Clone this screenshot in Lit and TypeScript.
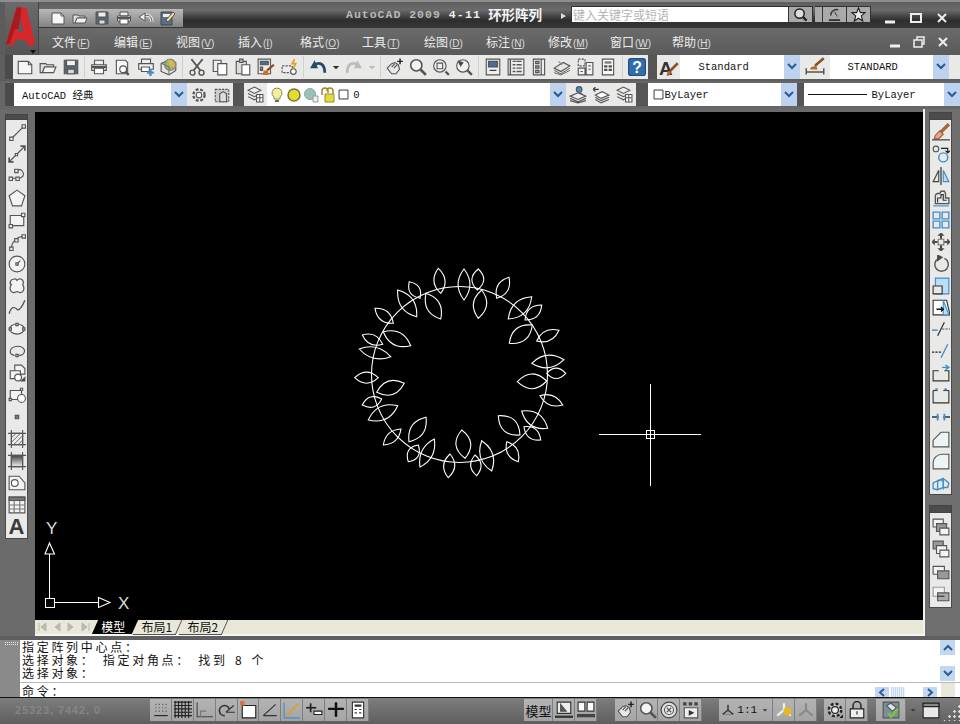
import { LitElement, html, css, svg } from "lit";
import { customElement } from "lit/decorators.js";

const BLUE = "#3f8fcf";

// every icon is drawn on a 16x16 box
const icons: Record<string, any> = {
  new: svg`<path d="M2 3h9l3 3v8H2z" fill="#f7f7f7"/><path d="M11 3v3h3"/>`,
  open: svg`<path d="M1 5h5l1 1h6v2H5l-2 5H1z" fill="#ddd"/><path d="M3 13l2-5h10l-2 5z" fill="#f2f2f2"/>`,
  save: svg`<path d="M2 2h12v12H2z" fill="#5a6472"/><path d="M4 2h8v5H4z" fill="#eee"/><path d="M5 10h6v4H5z" fill="#ddd"/>`,
  plot: svg`<path d="M4 2h8v4H4zM1.500 6h13v5h-13z" fill="#eee"/><path d="M4 9h8v5H4z" fill="#fff"/><path d="M1.500 8h13" stroke-width="2"/>`,
  preview: svg`<path d="M3 2h8l2 2v10H3z" fill="#f6f6f6"/><circle cx="9" cy="10" r="3" fill="#fff"/><path d="M11 12l3 3" stroke-width="2"/>`,
  publish: svg`<path d="M4 1h8v4H4zM1.500 5h13v5h-13z" fill="#eee"/><path d="M4 8h7v4H4z" fill="#fff"/><path d="M9 13h6M12 10v6" stroke="${BLUE}" stroke-width="2"/>`,
  globe: svg`<path d="M1 5l6-3 7 2v7l-6 4-7-3z" fill="#e6e6e6"/><circle cx="9" cy="6" r="5" fill="#8fb86a" stroke="#888"/><path d="M7 2a5 5 0 0 1 6 6l-4 0z" fill="#e6b04a" stroke="none"/><path d="M2 5l6 3v7" stroke="#777"/>`,
  cut: svg`<path d="M3 1l8 10M13 1L5 11" stroke-width="1.500"/><circle cx="4" cy="13" r="2.200" stroke-width="1.200"/><circle cx="12" cy="13" r="2.200" stroke-width="1.200"/>`,
  copy: svg`<path d="M2 2h7v10H2z" fill="#eee"/><path d="M6 5h8v10H6z" fill="#fff"/>`,
  paste: svg`<path d="M2 3h9v11H2z" fill="#ddd"/><path d="M5 1h3v3H5z" fill="#bbb"/><path d="M7 6h7v9H7z" fill="#fff"/>`,
  match: svg`<path d="M1 1h11v13H1z" fill="#eee"/><path d="M3 3h7v3H3z" fill="#4a6a9a"/><path d="M3 8h2v3H3z" fill="#888"/><path d="M15 6L9 11" stroke="#8a4a20" stroke-width="2"/><path d="M6 11l4 0 0 4-5 0z" fill="#c8702c" stroke="none"/>`,
  blockfx: svg`<path d="M1 7h9v6H1z" fill="#eee" stroke-dasharray="2 1"/><circle cx="11" cy="12" r="2.500" fill="#fff"/><path d="M12 1l-2 4h3l-2 4" stroke="#e0a020" stroke-width="1.500"/>`,
  undo: svg`<path d="M14 13C14 6 10 3 5 6" stroke="#27496e" stroke-width="2.500"/><path d="M1 9l7 0-3-7z" fill="#27496e" stroke="none"/>`,
  redo: svg`<path d="M2 13C2 6 6 3 11 6" stroke="#bbb" stroke-width="2.500"/><path d="M15 9l-7 0 3-7z" fill="#bbb" stroke="none"/>`,
  qundo: svg`<path d="M14 12C14 6 10 4 5 6" stroke="#eee" stroke-width="3"/><path d="M14 12C14 6 10 4 5 6" stroke="#555" stroke-width="1"/><path d="M1 7l6-4v8z" fill="#eee" stroke="#555"/>`,
  qprops: svg`<path d="M1 2h11v13H1z" fill="#5a7088" stroke="#444"/><path d="M3 4h7v3H3z" fill="#eee" stroke="none"/><path d="M6 10l2 2 7-8-2-2z" fill="#f0dc90" stroke="#555"/>`,
  drop: svg`<path d="M5 7h6l-3 3z" fill="#333" stroke="none"/>`,
  dropg: svg`<path d="M5 7h6l-3 3z" fill="#bbb" stroke="none"/>`,
  pan: svg`<path d="M1 9l4-4 3-1 3 2 1 4-3 4H5z" fill="#e8e8e8"/><path d="M5 8l3-3M7 9l3-3"/><path d="M10 3h5M12.500 .5v5" stroke="#222" stroke-width="1.300"/>`,
  zoom: svg`<circle cx="6.500" cy="6.500" r="5" fill="#f3f3f3" stroke-width="1.400"/><path d="M10 10l5 5" stroke-width="2.400"/>`,
  zoomwin: svg`<circle cx="7" cy="7" r="5.500" fill="#eee"/><path d="M4.500 4.500h5v5h-5z"/><path d="M12 12l3 3" stroke-width="2"/>`,
  zoomprev: svg`<circle cx="7" cy="7" r="5.500" fill="#f2f2f2"/><path d="M3 3l4 1-2 3z" fill="#333"/><path d="M11 11l4 4" stroke-width="2"/>`,
  props: svg`<path d="M2 1h12v14H2z" fill="#eee"/><path d="M4 3h8v5H4z" fill="#4a6a9a"/><path d="M5 11h6" stroke="#333"/>`,
  dc: svg`<path d="M1 1h14v14H1z" fill="#eee"/><path d="M3 1v14M5 3h8M5 6h8M5 9h8M5 12h8" stroke-width="1.200"/><path d="M8 3v10" stroke="#eee"/>`,
  palette: svg`<path d="M3 1h10v14H3z" fill="#eee"/><path d="M5 3h3v2H5zM5 7h3v2H5zM5 11h3v2H5z" fill="#aaa"/><path d="M10 1v14"/>`,
  sheet: svg`<path d="M1 9l8-5 6 3-8 5z" fill="#e6e6e6"/><path d="M1 11l6 3 8-5M1 13l6 2 8-4" stroke-width=".8"/><path d="M5 3l3 3" stroke="#888"/>`,
  markup: svg`<path d="M2 1h6v6H2z" stroke-dasharray="2 1"/><path d="M9 4h6v11H9zM2 9h6v6H2z" fill="#f2f2f2"/><path d="M11 7h2M11 10h2M4 12h2"/>`,
  calc: svg`<path d="M3 1h10v14H3z" fill="#f6f6f6"/><path d="M5 3h6v2H5z" fill="#777" stroke="none"/><path d="M5 7h2v1H5zM9 7h2v1H9zM5 10h2v1H5zM9 10h2v1H9z" fill="#555"/>`,
  help: svg`<rect x=".5" y=".5" width="15" height="15" rx="2" fill="#2f6eaa" stroke="#1f4f80"/><text x="8" y="13" text-anchor="middle" class="gl">?</text>`,
  textstyle: svg`<text x="0" y="14" class="big">A</text><path d="M15 5l-6 6" stroke="#8a5020" stroke-width="2"/><path d="M7 11l3 1-2 3-2 0z" fill="#b86a28" stroke="none"/>`,
  dimstyle: svg`<path d="M1 9v5M15 9v5M1 12h14" stroke-width="1.200"/><path d="M15 1L8 7" stroke="#8a5020" stroke-width="2"/><path d="M5 8l4-1 1 3H4z" fill="#b86a28" stroke="none"/>`,
  gear: svg`<circle cx="8" cy="8" r="5" fill="#eee" stroke-width="2" stroke-dasharray="2.500 1.500"/><circle cx="8" cy="8" r="2.500" fill="#fff"/>`,
  custom: svg`<path d="M2 3h12v11H2z" fill="#ccc" stroke-dasharray="2 1"/><path d="M6 14V7l3-2 3 2v7z" fill="#ddd"/>`,
  layer: svg`<path d="M1 4l6-3 6 3-6 3z" fill="#eee"/><path d="M1 7l6 3 3-1.500M1 10l6 3 2-1"/><path d="M9 8h6v7H9z" fill="#fff"/><path d="M9 11h6M12 8v7"/>`,
  bulb: svg`<path d="M8 1a5 5 0 0 1 3 9v2H5v-2a5 5 0 0 1 3-9z" fill="#f3ef9a" stroke="#8a8a55"/><path d="M6 14h4" stroke="#666" stroke-width="2"/>`,
  sun: svg`<circle cx="8" cy="8" r="6" fill="#e6dc30" stroke="#6f7a40" stroke-width="1.500"/>`,
  freeze: svg`<circle cx="7" cy="7" r="5.500" fill="#9cc0b8" stroke="#8aa"/><path d="M10 9h5v6h-5z" fill="#eee" stroke="#999"/>`,
  lock: svg`<path d="M2 8V4a3 3 0 0 1 6 0v2" stroke="#9a8a30" stroke-width="1.500"/><path d="M7 4a3 3 0 0 1 6 0v3" stroke="#9a8a30" stroke-width="1.500"/><path d="M5 7h9v8H5z" fill="#e6d840" stroke="#9a8a30"/>`,
  swatch: svg`<path d="M2.500 2.500h11v11h-11z" fill="#fff" stroke="#111"/>`,
  layerprev: svg`<path d="M3 8l5 3 7-3-6-3z" fill="#fff"/><path d="M3 10l5 3 7-3M3 12l5 3 7-3"/><path d="M1 3h5M1 3l2-2M1 3l2 2" stroke="#333"/>`,
  layerman: svg`<circle cx="9" cy="3" r="2.500" fill="${BLUE}"/><path d="M6 8c0-2 6-2 6 0z" fill="${BLUE}"/><path d="M1 9l7-3 7 3-7 3z" fill="#eee"/><path d="M1 11l7 3 7-3M1 13l7 2 7-2"/>`,
  // draw bar
  line: svg`<path d="M3 14L14 3"/><path d="M1.500 12.500h3v3h-3zM12.500 1.500h3v3h-3z" fill="#eee"/>`,
  xline: svg`<path d="M1 15L15 1" stroke-width="1.200"/><path d="M1 11v4h4M11 1h4v4" stroke-width="1.500"/><path d="M6.500 7.500h2v2h-2z" fill="#eee"/>`,
  pline: svg`<path d="M3 10h6C13 10 15 7 13 4 12 2 10 2 8 3"/><path d="M1 9h3v3H1zM7 9h3v3H7zM6 2h3v3H6z" fill="#eee"/>`,
  polygon: svg`<path d="M8 1l7 5-3 9H4L1 6z" fill="#f3f3f3"/>`,
  rect: svg`<path d="M2 4h12v9H2z" fill="#f3f3f3"/><path d="M1 12h3v3H1zM12 2h3v3h-3z" fill="#eee"/>`,
  arc: svg`<path d="M3 14C3 8 8 3 14 3"/><path d="M1.500 12.500h3v3h-3zM12.500 1.500h3v3h-3zM6 5h3v3H6z" fill="#eee"/>`,
  circle: svg`<circle cx="8" cy="8" r="7" fill="#f3f3f3"/><path d="M8 8l3-3"/><path d="M7 7h2v2H7z" fill="#eee"/>`,
  cloud: svg`<path d="M5 2c2-1 3 1 3 1s2-2 4-1 2 4 1 5c1 1 2 4 0 6s-4 0-5 0-3 2-5 0-1-5 0-6C1 6 2 2 5 2z" fill="#f3f3f3" stroke-width="1.100"/>`,
  spline: svg`<path d="M1 14C3 7 6 8 8 10S13 7 15 2" stroke-width="1.200"/>`,
  ellipse: svg`<ellipse cx="8" cy="8" rx="6.500" ry="4.500" fill="#f3f3f3"/><path d="M1 7h2v2H1zM13 7h2v2h-2zM7 3h2v2H7z" fill="#eee"/>`,
  ellarc: svg`<path d="M6 12C0 11 1 5 7 4c6-1 9 3 7 6-1 2-3 2-5 2"/><path d="M7 11h2v2H7z" fill="#eee"/>`,
  insert: svg`<path d="M6 1h6l3 3v5H6z" fill="#f3f3f3"/><path d="M2 6h9v7H2z" fill="#f3f3f3"/><circle cx="9" cy="12" r="3" fill="#fff"/><path d="M12 15l3-3v3z" fill="#111"/>`,
  block: svg`<path d="M2 4h10v8H2z" fill="#f3f3f3"/><circle cx="12" cy="11" r="3.500" fill="#fff"/><path d="M1 11h2v2H1zM11 2h2v2h-2z" fill="#eee"/>`,
  point: svg`<path d="M6.500 6.500h3v3h-3z" fill="#777"/>`,
  hatch: svg`<path d="M3 3h10v10H3z" fill="#eee"/><path d="M0 3h16M0 13h16M3 0v16M13 0v16"/><path d="M3 7l4-4M3 11l8-8M5 13l8-8M9 13l4-4" stroke-width=".8"/>`,
  gradient: svg`<defs><linearGradient id="gr" x2="0" y2="1"><stop stop-color="#444"/><stop offset="1" stop-color="#eee"/></linearGradient></defs><path d="M3 3h10v10H3z" fill="url(#gr)"/><path d="M0 3h16M0 13h16M3 0v16M13 0v16"/>`,
  region: svg`<path d="M1 2h9l5 6v6H1z" fill="#f3f3f3"/><circle cx="6" cy="8" r="3" fill="#fff"/>`,
  table: svg`<path d="M1 1h14v14H1z" fill="#f3f3f3"/><path d="M1 1h14v3H1z" fill="#777"/><path d="M1 8h14M1 11.500h14M5.500 4v11M10.500 4v11" stroke="#777"/>`,
  // modify bar
  erase: svg`<path d="M15 1L7 9" stroke="#a06a3c" stroke-width="3"/><path d="M3 11l4-4 3 3-4 4H2z" fill="#e8a890" stroke="#a05a40"/><path d="M0 15h16" stroke="#333"/>`,
  copyobj: svg`<circle cx="3.500" cy="3.500" r="2.500"/><circle cx="10" cy="11" r="4" stroke="${BLUE}" stroke-width="1.300"/><path d="M8 3h6v4M12 5l2 2 2-2" stroke="#222"/>`,
  mirror: svg`<path d="M8 0v16" stroke="#222"/><path d="M6 3v10H1z" stroke="#444"/><path d="M10 3v10h5z" fill="#bcdcf0" stroke="${BLUE}"/>`,
  offset: svg`<path d="M3 10V6a2 2 0 0 1 2-2h2l1-2h3l1 2v4h3v5H3z" stroke-width="1.200"/><path d="M5 12V8h3V5h2v5h3" stroke="#333"/><path d="M1 15h14" stroke="${BLUE}"/>`,
  array: svg`<path d="M1 1h6v6H1zM9 1h6v6H9zM1 9h6v6H1zM9 9h6v6H9z" stroke="${BLUE}" stroke-width="1.200"/>`,
  move: svg`<path d="M5.500 5.500h5v5h-5z" stroke="#777"/><path d="M8 5V1M8 15v-4M5 8H1M15 8h-4" stroke="#222" stroke-width="1.500"/><path d="M6 2l2-2 2 2zM6 14l2 2 2-2zM2 6L0 8l2 2zM14 6l2 2-2 2z" fill="#222"/>`,
  rotate: svg`<path d="M6 3a6 6 0 1 0 5 0" stroke-width="1.300"/><path d="M5 0l4 2-4 3z" fill="#444"/>`,
  scale: svg`<path d="M3 1h12v14H3z" fill="#bcdcf0" stroke="${BLUE}"/><path d="M1 8h8v7H1z" fill="#e8e8e8" stroke="#333"/>`,
  stretch: svg`<path d="M1 2h7l5 0 3 13H1z" fill="#fff" stroke="#333"/><path d="M10 2l5 13h-5z" fill="#bcdcf0" stroke="${BLUE}"/><path d="M4 10h6M8 8l2 2-2 2" stroke="#111" stroke-width="1.200"/>`,
  trim: svg`<path d="M0 9h5" stroke="${BLUE}" stroke-width="1.300"/><path d="M5 14l6-12" stroke="#222"/><path d="M9 8h7" stroke="#555" stroke-dasharray="2 1"/>`,
  extend: svg`<path d="M0 9h8" stroke="#222" stroke-dasharray="2 1"/><path d="M8 14l6-12" stroke="${BLUE}" stroke-width="1.300"/>`,
  break: svg`<path d="M1 6h14v9H1z" stroke="#333"/><path d="M6 6h5" stroke="#eee" stroke-width="2"/><path d="M9 3h5M12 1l3 2-3 2" stroke="${BLUE}" stroke-width="1.300"/>`,
  breakpt: svg`<path d="M1 4v11h14V4" stroke="#333"/><path d="M1 4h14" stroke="#333"/><path d="M5 4h5" stroke="#eee" stroke-width="2"/><path d="M3 3h2M11 3h2" stroke="${BLUE}" stroke-width="2"/>`,
  join: svg`<path d="M0 8h6M10 8h6" stroke="#333" stroke-width="1.300"/><path d="M5 5v6M11 5v6" stroke="${BLUE}" stroke-width="1.600"/>`,
  chamfer: svg`<path d="M1 15V9l7-7h7v13z" fill="#eef3f6"/>`,
  fillet: svg`<path d="M1 15V10C1 5 5 2 9 2h6v13z" fill="#eef3f6"/>`,
  explode: svg`<path d="M5 6l5-2v8l-5 2zM5 6L1 8v5l4 1" stroke="${BLUE}" stroke-width="1.200"/><path d="M10 4l5 4-1 4-4 0" stroke="${BLUE}" stroke-width="1.200"/><path d="M5 6h5v8" stroke="${BLUE}"/>`,
  order1: svg`<path d="M1 1h9v7H1z" fill="#f3f3f3"/><path d="M4 5h9v7H4z" fill="#999"/><path d="M7 9h8v6H7z" fill="#f3f3f3"/>`,
  order2: svg`<path d="M1 1h9v7H1z" fill="#999"/><path d="M4 5h9v7H4z" fill="#f3f3f3"/><path d="M7 9h8v6H7z" fill="#f3f3f3"/>`,
  order3: svg`<path d="M1 3h10v7H1z" fill="#f3f3f3"/><path d="M5 7h10v7H5z" fill="#999"/>`,
  order4: svg`<path d="M1 2h10v8H1z" fill="#f3f3f3" stroke="#999"/><path d="M5 7h10v7H5z" fill="#aaa"/><path d="M5 10h6" stroke="#333"/>`,
  // status bar
  snap: svg`<path d="M3 3h1M6 3h1M9 3h1M12 3h1M3 6h1M6 6h1M9 6h1M12 6h1M3 9h1M6 9h1M9 9h1M12 9h1" stroke-dasharray="1 2"/><path d="M2 13h12" stroke="#222"/>`,
  grid: svg`<path d="M0 1h16M0 4h16M0 7h16M0 10h16M0 13h16M1 0v15M4 0v15M7 0v15M10 0v15M13 0v15" stroke="#222"/>`,
  ortho: svg`<path d="M1 1v13h14" stroke="#444"/><path d="M4 14V9h5" stroke="#777"/>`,
  polar: svg`<path d="M6 13a4.500 4.500 0 1 1 4-6" stroke="#333" stroke-width="1.400"/><path d="M7 10l7-6M7 10h8" stroke="#333"/>`,
  osnap: svg`<path d="M2 4h12v11H2z" fill="#fff" stroke="#222"/><path d="M0 0h4v4H0z" fill="#d8763a" stroke="none"/>`,
  otrack: svg`<path d="M2 13L13 3M2 13h12" stroke="#333"/>`,
  ducs: svg`<path d="M1 1v14h14" stroke="${BLUE}"/><path d="M3 13L14 2" stroke="#e0a020" stroke-width="2" stroke-dasharray="3 1"/>`,
  dyn: svg`<path d="M1 6h9" stroke="#222" stroke-width="1.500"/><path d="M5 2v8" stroke="#222" stroke-width="1.500"/><path d="M8 9h7v3H8z" fill="#fff" stroke="#222"/>`,
  lw: svg`<path d="M1 7h14M8 1v13" stroke="#111" stroke-width="2.200"/>`,
  qp: svg`<path d="M3 1h10v14H3z" fill="#fff" stroke="#333"/><path d="M5 3h6v2H5zM5 7h2v1H5zM9 7h2v1H9zM5 10h2v1H5zM9 10h2v1H9z" fill="#333" stroke="none"/>`,
  model: svg`<path d="M2 1h12v10H2z" fill="#eee" stroke="#333"/><path d="M5 3v6h5z" fill="#555"/><path d="M0 14h16" stroke="#333" stroke-width="2"/>`,
  layouts: svg`<path d="M1 1h6v8H1zM9 1h6v8H9z" fill="#fff" stroke="#333"/><path d="M0 13h16" stroke="#444" stroke-width="3"/>`,
  wheel: svg`<circle cx="8" cy="8" r="7" fill="#ddd" stroke="#444"/><circle cx="8" cy="8" r="4" fill="#eee" stroke="#555"/><path d="M6 6l4 4M10 6l-4 4" stroke="#555"/>`,
  motion: svg`<path d="M1 1h3v3H1zM6 1h3v3H6zM11 1h3v3h-3z" fill="#444" stroke="none"/><path d="M2 6h12v9H2z" fill="#eee"/><path d="M6 8l5 2.500L6 13z" fill="#333" stroke="none"/>`,
  anno: svg`<path d="M8 8V2M8 8l-6 5M8 8l6 5" stroke="#333" stroke-width="1.600"/><path d="M4 13h8" stroke="#777"/>`,
  annosun: svg`<path d="M8 8V2M8 8l-6 5M8 8l6 5" stroke="#eee" stroke-width="2"/><circle cx="11" cy="9" r="3.500" fill="#e8b820" stroke="none"/>`,
  annooff: svg`<path d="M8 8V2M8 8l-6 5M8 8l6 5" stroke="#8a8a8a" stroke-width="2"/>`,
  gearbig: svg`<circle cx="8" cy="8" r="5.500" fill="#ccc" stroke="#222" stroke-width="2.200" stroke-dasharray="2.500 1.800"/><circle cx="8" cy="8" r="3" fill="#eee" stroke="#222"/><path d="M12 15l3-3v3z" fill="#111" stroke="none"/>`,
  padlock: svg`<path d="M4.500 7V4a3.500 3.500 0 0 1 7 0v3" stroke="#222" stroke-width="1.300"/><path d="M2 7h12v8H2z" fill="#eee" stroke="#222"/><path d="M8 9v3" stroke="#222"/>`,
  clean: svg`<path d="M1 1h14v14H1z" fill="#7b8f96" stroke="#555"/><path d="M4 4l4-2 5 4-4 3z" fill="#dce8ee"/><path d="M6 11l2 3 6-7" stroke="#7fc040" stroke-width="2.200"/>`,
  win: svg`<path d="M1 2h14v13H1z" fill="#e8e8e8" stroke="#222"/><path d="M1 2h14v3H1z" fill="#888" stroke="#222"/>`,
  search: svg`<circle cx="7" cy="7" r="5" fill="#ddd" stroke="#222" stroke-width="1.600"/><path d="M10.500 10.500l4 4" stroke="#222" stroke-width="2.400"/>`,
  sat: svg`<path d="M4 9c0-5 5-7 8-6" stroke="#333" stroke-width="1.500"/><path d="M8 5l3 5" stroke="#333"/><path d="M2 14h12" stroke="#333" stroke-width="2"/>`,
  star: svg`<path d="M8 1l2 5h5l-4 3.500 1.500 5.500L8 12l-4.500 3L5 9.500 1 6h5z" fill="#eee" stroke="#222" stroke-width="1.200"/>`,
};

const icon = (name: string, size = 18) => html`<svg class="ic" width=${size} height=${size} viewBox="0 0 16 16">${icons[name]}</svg>`;

const chevron = html`<svg class="chev" width="10" height="8" viewBox="0 0 10 8"><path d="M1 1l4 4 4-4" /></svg>`;

const MENUS = [["文件", "F"], ["编辑", "E"], ["视图", "V"], ["插入", "I"], ["格式", "O"], ["工具", "T"], ["绘图", "D"], ["标注", "N"], ["修改", "M"], ["窗口", "W"], ["帮助", "H"]];
const STD_GROUPS = [
  ["new", "open", "save"],
  ["plot", "preview", "publish", "globe"],
  ["cut", "copy", "paste", "match", "blockfx"],
  ["undo", "drop", "redo", "dropg"],
  ["pan", "zoom", "zoomwin", "zoomprev"],
  ["props", "dc", "palette", "sheet", "markup", "calc"],
  ["help"],
];
const DRAW = ["line", "xline", "pline", "polygon", "rect", "arc", "circle", "cloud", "spline", "ellipse", "ellarc", "insert", "block", "point", "hatch", "gradient", "region", "table"];
const MODIFY = ["erase", "copyobj", "mirror", "offset", "array", "move", "rotate", "scale", "stretch", "trim", "extend", "break", "breakpt", "join", "chamfer", "fillet", "explode"];
const ORDER = ["order1", "order2", "order3", "order4"];
const STATUS_TOGGLES = ["snap", "grid", "ortho", "polar", "osnap", "otrack", "ducs", "dyn", "lw", "qp"];

// leaves as [tipA x, y, tipB x, y, width], read off a 3x crop with origin (340, 255)
const LEAVES = [
  [295, 40, 302, 115, 30], [372, 42, 372, 135, 32], [415, 42, 412, 105, 32], [507, 67, 470, 130, 30],
  [425, 105, 415, 190, 36], [258, 115, 302, 192, 36], [208, 80, 240, 130, 28], [173, 105, 230, 185, 36],
  [105, 160, 160, 205, 28], [575, 125, 505, 192, 36], [605, 150, 555, 195, 28], [577, 210, 508, 265, 38],
  [657, 226, 590, 258, 28], [130, 230, 212, 272, 36], [67, 240, 128, 268, 26], [58, 282, 152, 305, 30],
  [672, 314, 575, 325, 34], [677, 355, 620, 355, 28], [620, 378, 532, 380, 40], [44, 368, 115, 368, 30],
  [193, 385, 110, 412, 38], [67, 450, 125, 432, 28], [173, 452, 85, 495, 36], [600, 422, 668, 450, 26],
  [545, 468, 623, 520, 36], [552, 515, 602, 555, 28], [475, 482, 540, 540, 40], [500, 560, 535, 620, 28],
  [183, 522, 130, 570, 26], [258, 487, 207, 560, 36], [365, 525, 375, 610, 40], [235, 570, 205, 620, 30],
  [283, 552, 240, 636, 30], [425, 557, 455, 648, 34], [405, 600, 410, 662, 28], [330, 597, 325, 668, 30],
];

function leafPath([ax, ay, bx, by, w]: number[]) {
  const [x1, y1, x2, y2] = [ax / 3 + 340, ay / 3 + 255, bx / 3 + 340, by / 3 + 255];
  const len = Math.hypot(x2 - x1, y2 - y1);
  const nx = (-(y2 - y1) / len) * (w / 2.700);
  const ny = ((x2 - x1) / len) * (w / 2.700);
  const [mx, my] = [(x1 + x2) / 2, (y1 + y2) / 2];
  const f = (n: number) => n.toFixed(1);
  return `M${f(x1)} ${f(y1)}Q${f(mx + nx)} ${f(my + ny)} ${f(x2)} ${f(y2)}Q${f(mx - nx)} ${f(my - ny)} ${f(x1)} ${f(y1)}Z`;
}

@customElement("app-root")
export class AppRoot extends LitElement {
  static styles = css`
    :host {
      display: block;
      width: 960px;
      height: 724px;
      overflow: hidden;
      font-family: "Noto Sans CJK SC", "Liberation Sans", sans-serif;
    }
    .app {
      display: flex;
      flex-direction: column;
      height: 724px;
      background: #6b6b6b;
    }
    .ic {
      display: block;
      flex: none;
      fill: none;
      stroke: #555;
      stroke-width: 1;
    }
    .ic .gl {
      font: bold 14px "Liberation Sans", sans-serif;
      fill: #fff;
      stroke: none;
    }
    .ic .big {
      font: bold 15px "Liberation Sans", sans-serif;
      fill: #333;
      stroke: none;
    }
    .chev {
      fill: none;
      stroke: #2c5a94;
      stroke-width: 2;
    }

    /* top: logo on the left, title and menu on the right */
    .top {
      display: flex;
      height: 55px;
      background: #5c5c5c;
      border-top: 2px solid #8e8e8e;
      box-sizing: border-box;
    }
    .logo {
      width: 34px;
      flex: none;
      position: relative;
      margin-left: 5px;
      background: linear-gradient(#6a6a6a, #555);
      border-right: 1px solid #444;
      box-sizing: border-box;
    }
    .logo svg {
      display: block;
    }
    .logo .mark {
      position: absolute;
      right: 2px;
      bottom: 1px;
      width: 0;
      height: 0;
      border: 3px solid transparent;
      border-top: 4px solid #111;
      border-bottom: 0;
    }
    .heads {
      flex: 1;
      min-width: 0;
      display: flex;
      flex-direction: column;
    }
    .title {
      height: 26px;
      display: flex;
      align-items: flex-start;
      background: linear-gradient(#5d5d5d, #6b6b6b 30%, #2e2e2e 70%, #383838);
    }
    .qat {
      width: 144px;
      height: 18px;
      margin-top: 7px;
      display: flex;
      align-items: center;
      gap: 6px;
      padding-left: 11px;
      box-sizing: border-box;
      background: linear-gradient(#b8b8b8, #848484);
    }
    .caption {
      margin-left: 163px;
      width: 215px;
      flex: none;
      height: 24px;
      display: flex;
      align-items: center;
      font: bold 11.500px "Liberation Mono", monospace;
      letter-spacing: 1px;
      color: #b8b8b8;
      white-space: pre;
    }
    .caption b {
      color: #f2f2f2;
      letter-spacing: 1.200px;
    }
    .caption .cjk {
      font: bold 13.500px "Noto Sans CJK SC", sans-serif;
      letter-spacing: 0;
      margin-left: 7px;
      color: #f4f4f4;
    }
    .infotri {
      width: 0;
      height: 0;
      border: 3px solid transparent;
      border-left: 5px solid #ddd;
      border-right: 0;
      margin: 11px 5px 0 0;
    }
    .search {
      width: 218px;
      height: 17px;
      margin-top: 4px;
      background: #fff;
      border: 1px solid #333;
      box-sizing: border-box;
      font-size: 12px;
      line-height: 15px;
      color: #b4b4b4;
      padding-left: 1px;
      overflow: hidden;
    }
    .sbtn {
      height: 17px;
      margin-top: 4px;
      width: 24px;
      display: flex;
      align-items: center;
      justify-content: center;
      background: #aaa;
      border: 1px solid #333;
      border-left: 0;
      box-sizing: border-box;
    }
    .sbtn.narrow {
      width: 8px;
      margin-left: 2px;
    }
    .winbtns {
      display: flex;
      margin-left: 6px;
      margin-top: 6px;
    }
    .winbtns span {
      width: 26px;
      height: 20px;
      display: flex;
      align-items: center;
      justify-content: center;
    }
    .win-ic {
      stroke: #eee;
      fill: none;
      stroke-width: 2;
      display: block;
    }
    .menu {
      flex: 1;
      display: flex;
      align-items: center;
      padding-left: 13px;
      background: linear-gradient(#6b6b6b, #5a5a5a);
    }
    .menu .item {
      width: 62px;
      flex: none;
      font-size: 12px;
      color: #ececec;
      white-space: nowrap;
    }
    .menu .item small {
      font: 10px "Liberation Sans", sans-serif;
      margin-left: 1px;
      color: #ddd;
    }
    .menu .mdi {
      margin-left: auto;
      display: flex;
      padding-right: 5px;
    }
    .menu .mdi span {
      width: 24px;
      display: flex;
      justify-content: center;
    }

    /* toolbars */
    .bar {
      display: flex;
      align-items: stretch;
      height: 26px;
      padding: 0 0 2px 5px;
      box-sizing: border-box;
      background: #5e5e5e;
    }
    .bar.two {
      height: 28px;
      padding: 2px 0 3px 5px;
      background: #666;
    }
    .grip {
      width: 8px;
      flex: none;
      background: #4a4a4a;
    }
    .grip.wide {
      width: 9px;
    }
    .band {
      display: flex;
      align-items: center;
      background: #e9e9e7;
    }
    .band.fill {
      flex: 1;
    }
    .band .btn {
      width: 23.100px;
      height: 24px;
      flex: none;
      display: flex;
      align-items: center;
      justify-content: center;
    }
    .band .btn.small {
      width: 12.500px;
    }
    .band .btn.dim {
      width: 30px;
    }
    .band .sep {
      width: 5.500px;
      align-self: stretch;
      flex: none;
      position: relative;
    }
    .band .sep::after {
      content: "";
      position: absolute;
      left: 2px;
      top: 1px;
      bottom: 1px;
      width: 1px;
      background: #d0d0ce;
    }
    .gap {
      flex: none;
      background: #555;
    }
    .g7 {
      width: 7px;
    }
    .g9 {
      width: 9px;
    }
    .g11 {
      width: 11px;
    }
    .g12 {
      width: 12px;
    }
    .combo {
      display: flex;
      align-items: center;
      flex: none;
      box-sizing: border-box;
      background: #fff;
      font: 10.500px "Liberation Mono", "Noto Sans CJK SC", monospace;
      color: #111;
      white-space: pre;
    }
    .combo .val {
      flex: 1;
      min-width: 0;
      overflow: hidden;
      display: flex;
      align-items: center;
      padding-left: 4px;
    }
    .combo .arrow {
      width: 16px;
      align-self: stretch;
      flex: none;
      background: #bcd2ee;
      display: flex;
      align-items: center;
      justify-content: center;
    }
    .c-text {
      width: 120px;
    }
    .c-dim {
      width: 119px;
    }
    .c-work {
      width: 173px;
    }
    .c-layer {
      width: 299px;
    }
    .c-color {
      width: 149px;
    }
    .c-ltype {
      flex: 1;
    }
    .c-text .val {
      padding-left: 18px;
    }
    .c-dim .val {
      padding-left: 17px;
    }
    .c-work .val {
      padding-left: 8px;
    }
    .c-layer .val {
      padding-left: 2px;
      gap: 1px;
    }
    .zero {
      margin-left: 2px;
    }
    .rule {
      width: 59px;
      height: 1px;
      background: #111;
      margin-right: 5px;
    }

    /* middle */
    .mid {
      flex: 1;
      min-height: 0;
      display: flex;
    }
    .side {
      flex: none;
      display: flex;
      flex-direction: column;
      width: 35px;
      padding: 5px 7px 0 5px;
      box-sizing: border-box;
    }
    .side.right {
      padding: 3px 8px 0 4px;
      background: #6e6e6e;
    }
    .vgrip {
      height: 6px;
      flex: none;
      background: #4c4c4c;
      border: 1px solid #444;
      box-sizing: border-box;
    }
    .right .vgrip {
      height: 8px;
    }
    .vbar {
      background: #e9e9e7;
      display: flex;
      flex-direction: column;
      align-items: center;
      padding-top: 1px;
      border: 1px solid #4a4a4a;
      border-top: 0;
    }
    .vbar span {
      height: 21.950px;
      display: flex;
      align-items: center;
    }
    .vbar span.mtext {
      font: bold 22px/22px "Liberation Sans", sans-serif;
      color: #3a3a3a;
    }
    .vbar.order {
      padding-top: 3px;
      padding-bottom: 2px;
    }
    .vbar.order span {
      height: 22.300px;
    }
    .right .vgrip.mt {
      margin-top: 10px;
    }
    .centre {
      flex: 1;
      min-width: 0;
      display: flex;
      flex-direction: column;
      border-right: 2px solid #f2f2ee;
    }
    .canvas {
      display: block;
      flex: none;
      background: #000;
      margin-top: 3px;
    }
    .canvas .ln {
      fill: none;
      stroke: #fff;
      stroke-width: 1.100;
    }
    .canvas .hair {
      stroke-width: 1;
    }
    .canvas text {
      font: 17px "Liberation Sans", sans-serif;
      fill: #dcdcdc;
    }
    .tabs {
      height: 16px;
      flex: none;
      display: flex;
      align-items: flex-start;
      background: #e9e8d8;
      border-bottom: 2px solid #f6f6f2;
      box-sizing: border-box;
      font-size: 12px;
      color: #111;
    }
    .nav {
      display: flex;
      width: 58px;
      padding-left: 1px;
      box-sizing: border-box;
      height: 14px;
      align-items: center;
    }
    .nav svg {
      display: block;
      fill: #b8b8ae;
      stroke: #b8b8ae;
    }
    .tab {
      height: 14px;
      line-height: 13px;
      transform: skewX(-24deg);
    }
    .tab > span {
      display: block;
      transform: skewX(24deg);
    }
    .tab.on {
      background: #000;
      color: #fff;
      margin-left: 2px;
      margin-right: 1px;
      width: 28px;
      padding: 0 6px;
    }
    .tab.off {
      border-right: 1px solid #555;
      border-bottom: 1px solid #555;
      padding: 0 6px 0 5px;
      margin-right: 3px;
    }

    /* command window */
    .cmd {
      height: 61px;
      flex: none;
      display: flex;
      background: #6a6a6a;
      border-top: 4px solid #5f5f62;
      box-sizing: border-box;
    }
    .cmdgrip {
      width: 20px;
      flex: none;
      padding: 2px 0 0 5px;
      box-sizing: border-box;
      background: #8a8a8a;
    }
    .cmdgrip i {
      display: block;
      width: 13px;
      height: 3px;
      border-top: 1px dotted #eee;
      border-bottom: 1px dotted #eee;
      box-sizing: border-box;
    }
    .cmdbody {
      flex: 1;
      min-width: 0;
      display: flex;
      flex-direction: column;
      background: #fff;
    }
    .hist {
      height: 43px;
      flex: none;
      display: flex;
      border-bottom: 1px solid #b8b8b8;
      box-sizing: border-box;
    }
    .lines {
      flex: 1;
      padding: 0 0 0 2px;
      font-size: 12px;
      line-height: 13px;
      letter-spacing: 2.700px;
      word-spacing: 1.900px;
      color: #111;
      white-space: pre;
    }
    .vscroll {
      width: 20px;
      flex: none;
      display: flex;
      flex-direction: column;
      justify-content: space-between;
      background: #fff;
      padding: 0 5px 1px 0;
      box-sizing: border-box;
    }
    .vscroll span {
      height: 15px;
      background: #c2d8f0;
      display: flex;
      align-items: center;
      justify-content: center;
    }
    .input {
      flex: 1;
      min-height: 0;
      display: flex;
      align-items: center;
      font-size: 12px;
      letter-spacing: 2.700px;
      padding-left: 2px;
      color: #111;
    }
    .hscroll {
      margin-left: auto;
      display: flex;
      align-self: stretch;
      padding-right: 5px;
      letter-spacing: 0;
    }
    .hscroll span {
      height: 10px;
      margin-top: 4px;
      width: 14px;
      display: flex;
      align-items: center;
      justify-content: center;
      background: #c2d8f0;
    }
    .hscroll .thumb {
      margin: 4px 18px 0 2px;
      background: repeating-linear-gradient(90deg, #c2d8f0 0 1px, #eaf1fa 1px 2px);
    }
    .hscroll .corner {
      height: auto;
      margin: 0 0 0 4px;
      background: #e9e8d8;
    }

    /* status bar */
    .status {
      height: 27px;
      flex: none;
      display: flex;
      align-items: flex-start;
      padding-top: 1px;
      box-sizing: border-box;
      border-top: 1px solid #111;
      background: linear-gradient(#7d7d7d, #5f5f5f);
    }
    .coords {
      width: 150px;
      flex: none;
      padding: 5px 0 0 15px;
      box-sizing: border-box;
      font: bold 11px "Liberation Sans", sans-serif;
      letter-spacing: 0.900px;
      color: #858585;
      white-space: pre;
    }
    .sgroup {
      display: flex;
      height: 22px;
      flex: none;
    }
    .sgroup span {
      flex: none;
      width: 21.900px;
      display: flex;
      align-items: center;
      justify-content: center;
      background: linear-gradient(#b4b4b4, #a4a4a4);
      box-shadow: inset -1px 0 0 #7e7e7e;
    }
    .sgroup span.word {
      width: 29px;
      font-size: 13px;
      color: #111;
    }
    .sgroup span.wide {
      width: 54px;
      gap: 2px;
      font: 11px "Liberation Mono", monospace;
      color: #111;
    }
    .sgroup span.clean {
      width: 30px;
    }
    .sgroup span.dark {
      background: none;
      box-shadow: none;
    }
    .sgroup span.tiny {
      width: 14px;
    }
    .m155 {
      margin-left: 155px;
    }
    .m18 {
      margin-left: 18px;
    }
    .m17 {
      margin-left: 17px;
    }
    .m7 {
      margin-left: 7px;
    }
    .m8 {
      margin-left: 8px;
    }
    .resize {
      margin-left: auto;
      width: 18px;
      height: 22px;
      background: radial-gradient(circle, #ddd 1px, transparent 1.500px) 0 0 / 5px 5px;
      clip-path: polygon(100% 20%, 100% 100%, 0 100%);
    }
  `;

  private _toolbar1() {
    return html`<div class="bar">
      <div class="grip"></div>
      <div class="band">
        ${STD_GROUPS.map(
          (g, i) => html`${i ? html`<div class="sep"></div>` : ""}${g.map(
            (n) => html`<div class="btn ${n.startsWith("drop") ? "small" : ""}">${icon(n)}</div>`
          )}`
        )}
      </div>
      <div class="gap g9"></div>
      <div class="band"><div class="btn">${icon("textstyle", 20)}</div></div>
      <div class="combo c-text">
        <div class="val">Standard</div>
        <div class="arrow">${chevron}</div>
      </div>
      <div class="band"><div class="btn dim">${icon("dimstyle", 20)}</div></div>
      <div class="combo c-dim">
        <div class="val">STANDARD</div>
        <div class="arrow">${chevron}</div>
      </div>
      <div class="band fill"></div>
    </div>`;
  }

  private _toolbar2() {
    return html`<div class="bar two">
      <div class="grip wide"></div>
      <div class="combo c-work">
        <div class="val">AutoCAD 经典</div>
        <div class="arrow">${chevron}</div>
      </div>
      <div class="band">
        <div class="btn">${icon("gear")}</div>
        <div class="btn">${icon("custom")}</div>
      </div>
      <div class="gap g11"></div>
      <div class="band"><div class="btn">${icon("layer", 17)}</div></div>
      <div class="combo c-layer">
        <div class="val">${icon("bulb", 16)}${icon("sun", 16)}${icon("freeze", 16)}${icon("lock", 16)}${icon("swatch", 13)}<span class="zero">0</span></div>
        <div class="arrow">${chevron}</div>
      </div>
      <div class="band">
        <div class="btn">${icon("layerman")}</div>
        <div class="btn">${icon("layerprev")}</div>
        <div class="btn">${icon("layer", 17)}</div>
      </div>
      <div class="gap g12"></div>
      <div class="combo c-color">
        <div class="val">${icon("swatch", 13)}ByLayer</div>
        <div class="arrow">${chevron}</div>
      </div>
      <div class="gap g7"></div>
      <div class="combo c-ltype">
        <div class="val"><span class="rule"></span>ByLayer</div>
        <div class="arrow">${chevron}</div>
      </div>
    </div>`;
  }

  private _canvas() {
    const leaves = LEAVES.map((l) => leafPath(l)).join("");
    return html`<svg class="canvas" width="888" height="508" viewBox="35 112 888 508">
      <circle class="ln" cx="459.500" cy="374.500" r="88" />
      <path class="ln" d=${leaves} />
      <path class="ln hair" shape-rendering="crispEdges" d="M599 434.500h102M650.500 384v102M646.500 430.500h8v8h-8z" />
      <path class="ln hair" shape-rendering="crispEdges" d="M45.500 598.500h9v9h-9zM54 602.500h44M49.500 598v-44" />
      <path class="ln" d="M98.500 597.500L110 602.500 98.500 607.500zM45 554L49.500 543 54.500 554z" />
      <text x="46" y="534">Y</text>
      <text x="118" y="609">X</text>
    </svg>`;
  }

  render() {
    return html`<div class="app">
      <div class="top">
        <div class="logo">
          <svg width="33" height="50" viewBox="0 0 34 50">
            <path d="M12 5h10l9 37-5 3-6-7h-9l-3 7-7-3z" fill="#d8262a" />
            <path d="M12 5h5l-2 22h-5l-5 15-4 1z" fill="#a81a1e" />
            <path d="M16 16l3 14h-6z" fill="#5c5c5c" />
          </svg>
          <i class="mark"></i>
        </div>
        <div class="heads">
          <div class="title">
            <div class="qat">${["new", "open", "save", "plot", "qundo", "qprops"].map((n) => icon(n, 16))}</div>
            <div class="caption">AutoCAD 2009 <b>4-11</b><span class="cjk">环形阵列</span></div>
            <i class="infotri"></i>
            <div class="search">键入关键字或短语</div>
            <div class="sbtn">${icon("search", 15)}</div>
            <div class="sbtn narrow"></div>
            <div class="sbtn">${icon("sat", 15)}</div>
            <div class="sbtn">${icon("star", 15)}</div>
            <div class="winbtns">
              <span><svg class="win-ic" width="12" height="12"><path d="M1 10h10" stroke-width="3" /></svg></span>
              <span><svg class="win-ic" width="12" height="12"><path d="M1 2h10v8H1z" /></svg></span>
              <span><svg class="win-ic" width="12" height="12"><path d="M2 2l8 8M10 2l-8 8" /></svg></span>
            </div>
          </div>
          <div class="menu">
            ${MENUS.map(([t, k]) => html`<div class="item">${t}<small>(<u>${k}</u>)</small></div>`)}
            <div class="mdi">
              <span><svg class="win-ic" width="12" height="12"><path d="M1 10h10" stroke-width="3" /></svg></span>
              <span><svg class="win-ic" width="12" height="12"><path d="M1 4h8v7H1zM4 4V1h7v7H9" stroke-width="1.500" /></svg></span>
              <span><svg class="win-ic" width="12" height="12"><path d="M2 2l8 8M10 2l-8 8" /></svg></span>
            </div>
          </div>
        </div>
      </div>
      ${this._toolbar1()} ${this._toolbar2()}
      <div class="mid">
        <div class="side">
          <div class="vgrip"></div>
          <div class="vbar">${DRAW.map((n) => html`<span>${icon(n)}</span>`)}<span class="mtext">A</span></div>
        </div>
        <div class="centre">
          ${this._canvas()}
          <div class="tabs">
            <div class="nav">
              ${["M9 2L4 6l5 4zM2 2v8", "M9 2L4 6l5 4z", "M3 2l5 4-5 4z", "M3 2l5 4-5 4zM10 2v8"].map(
                (d) => html`<svg width="14" height="12" viewBox="0 0 12 12"><path d=${d} /></svg>`
              )}
            </div>
            <div class="tab on"><span>模型</span></div>
            <div class="tab off"><span>布局1</span></div>
            <div class="tab off"><span>布局2</span></div>
          </div>
        </div>
        <div class="side right">
          <div class="vgrip"></div>
          <div class="vbar">${MODIFY.map((n) => html`<span>${icon(n)}</span>`)}</div>
          <div class="vgrip mt"></div>
          <div class="vbar order">${ORDER.map((n) => html`<span>${icon(n)}</span>`)}</div>
        </div>
      </div>
      <div class="cmd">
        <div class="cmdgrip"><i></i></div>
        <div class="cmdbody">
          <div class="hist">
            <div class="lines">指定阵列中心点：
选择对象： 指定对角点： 找到 8 个
选择对象：</div>
            <div class="vscroll">
              <span><svg class="chev" width="10" height="8" viewBox="0 0 10 8"><path d="M1 6l4-4 4 4" /></svg></span>
              <span>${chevron}</span>
            </div>
          </div>
          <div class="input">
            命令：
            <div class="hscroll">
              <span><svg class="chev" width="8" height="9" viewBox="0 0 8 9"><path d="M6 1L2 4.500 6 8" /></svg></span>
              <span class="thumb"></span>
              <span><svg class="chev" width="8" height="9" viewBox="0 0 8 9"><path d="M2 1l4 3.500L2 8" /></svg></span>
              <span class="corner"></span>
            </div>
          </div>
        </div>
      </div>
      <div class="status">
        <div class="coords">25323, 7442, 0</div>
        <div class="sgroup">${STATUS_TOGGLES.map((n) => html`<span>${icon(n)}</span>`)}</div>
        <div class="sgroup m155">
          <span class="word">模型</span>
          <span>${icon("model")}</span>
          <span>${icon("layouts")}</span>
        </div>
        <div class="sgroup m18">
          <span>${icon("pan")}</span>
          <span>${icon("zoom")}</span>
          <span>${icon("wheel")}</span>
          <span>${icon("motion")}</span>
        </div>
        <div class="sgroup m17">
          <span class="wide">${icon("anno", 14)}1:1${icon("drop", 12)}</span>
          <span>${icon("annosun")}</span>
          <span>${icon("annooff")}</span>
        </div>
        <div class="sgroup m7">
          <span>${icon("gearbig")}</span>
          <span>${icon("padlock")}</span>
        </div>
        <div class="sgroup m8">
          <span class="clean">${icon("clean")}</span>
          <span class="dark tiny">${icon("drop", 12)}</span>
          <span class="dark">${icon("win")}</span>
        </div>
        <div class="resize"></div>
      </div>
    </div>`;
  }
}
